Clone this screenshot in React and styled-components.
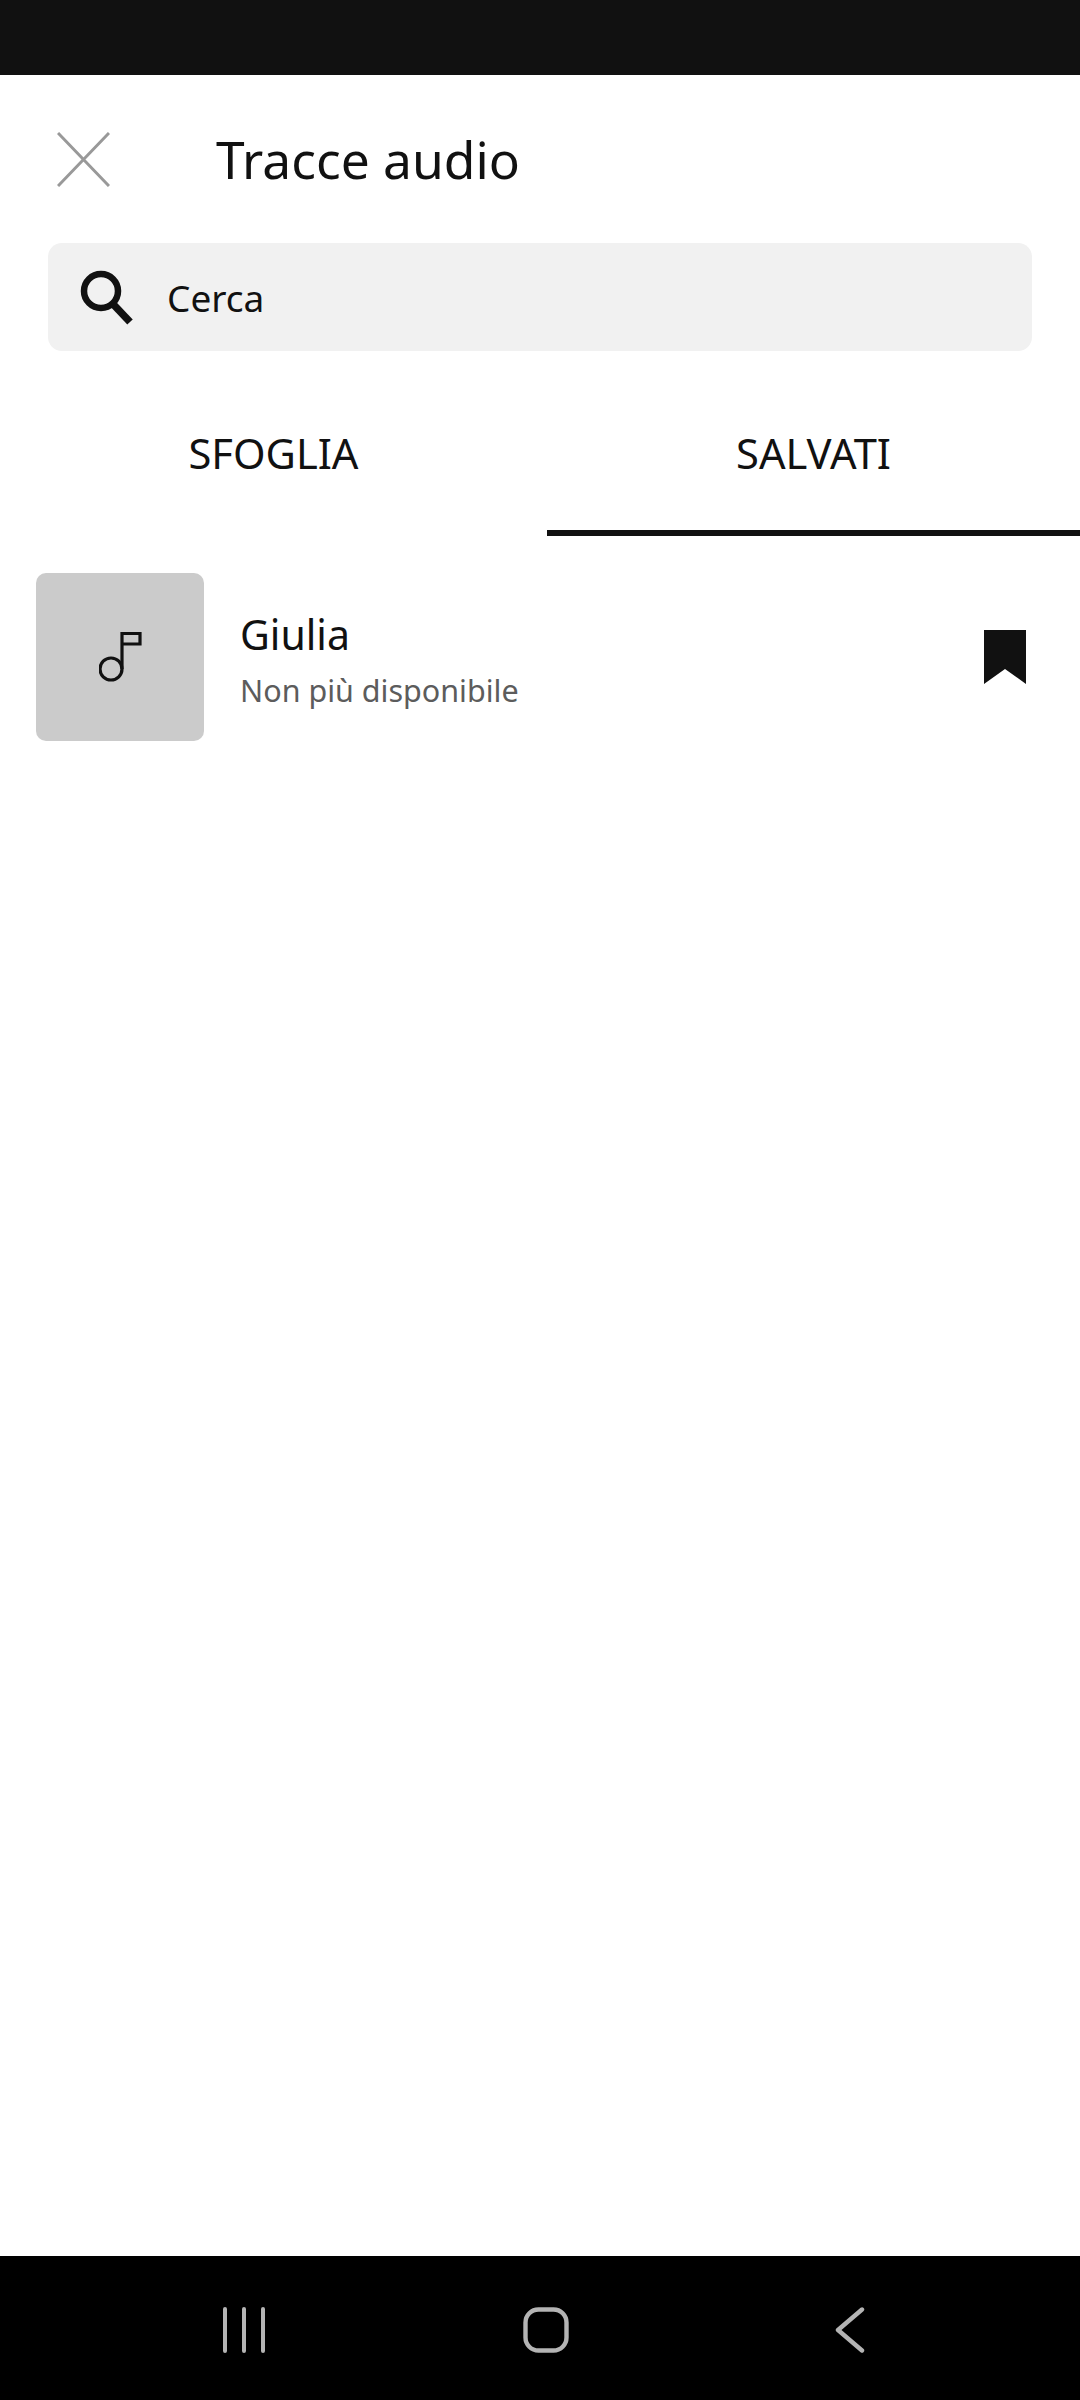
import React from "react";
import styled, { createGlobalStyle } from "styled-components";

const Global = createGlobalStyle`
  html, body { margin: 0; padding: 0; background: #fff; }
  * { box-sizing: border-box; }
`;
const Screen = styled.div`
  width: 1080px; height: 2400px; display: flex; flex-direction: column;
  background: #fff; color: #111; font-family: "Noto Sans", "Open Sans", sans-serif;
`;
const StatusBar = styled.div`height: 75px; background: #111; flex: none;`;
const Header = styled.header`
  height: 168px; flex: none; display: flex; align-items: center; padding: 0 0 0 57px;
`;
const CloseIcon = styled.svg`width: 53px; height: 55px; flex: none; margin-right: 106px;`;
const Title = styled.h1`margin: 0; font-size: 51.5px; line-height: 64px; font-weight: 400;`;
const SearchBar = styled.div`
  height: 108px; margin: 0 48px; flex: none; background: #f1f1f1; border-radius: 14px;
  display: flex; align-items: center; padding-left: 31px; gap: 34px;
`;
const SearchIcon = styled.svg`width: 54px; height: 56px; flex: none;`;
const SearchText = styled.span`font-size: 37px; line-height: 48px; padding-top: 2px;`;
const Tabs = styled.nav`height: 185px; flex: none; display: flex;`;
const Tab = styled.div`
  width: ${p => p.$w}px; flex: none; display: flex; justify-content: center; align-items: flex-start;
  padding-top: 74px; font-size: 41.7px; line-height: 56px;
  border-bottom: 6px solid ${p => (p.$active ? "#111" : "transparent")};
`;
const Row = styled.div`
  display: flex; align-items: center; margin-top: 37px; padding: 0 54px 0 36px; flex: none;
`;
const Thumb = styled.div`
  width: 168px; height: 168px; flex: none; background: #cbcbcb; border-radius: 10px;
  display: flex; align-items: center; justify-content: center;
`;
const NoteIcon = styled.svg`width: 43px; height: 50px;`;
const Info = styled.div`flex: 1; margin-left: 36px; padding-top: 4px; display: flex; flex-direction: column;`;
const Name = styled.div`font-size: 41px; line-height: 56px;`;
const Sub = styled.div`font-size: 30.5px; line-height: 44px; color: #5c5c5c; margin-top: 6px;`;
const BookmarkIcon = styled.svg`width: 42px; height: 54px; flex: none;`;
const Spacer = styled.div`flex: 1;`;
const NavBar = styled.footer`
  height: 144px; flex: none; background: #000; display: flex; align-items: center;
  padding: 4px 0 0 222px;
`;
const NavIcon = styled.svg`
  flex: none; height: 46px; width: ${p => p.$w}px; margin-right: ${p => p.$mr || 0}px;
`;

export default function App() {
  return (
    <Screen>
      <Global />
      <StatusBar />
      <Header>
        <CloseIcon viewBox="0 0 53 55">
          <path d="M1 1 L52 54 M52 1 L1 54" stroke="#999" strokeWidth="3" fill="none" />
        </CloseIcon>
        <Title>Tracce audio</Title>
      </Header>
      <SearchBar>
        <SearchIcon viewBox="0 0 54 56">
          <circle cx="22" cy="22" r="17" stroke="#111" strokeWidth="6.5" fill="none" />
          <path d="M34 35 L51 53" stroke="#111" strokeWidth="7.5" fill="none" />
        </SearchIcon>
        <SearchText>Cerca</SearchText>
      </SearchBar>
      <Tabs>
        <Tab $w={547}>SFOGLIA</Tab>
        <Tab $w={533} $active>SALVATI</Tab>
      </Tabs>
      <Row>
        <Thumb>
          <NoteIcon viewBox="0 0 43 50">
            <circle cx="12" cy="37" r="11" stroke="#111" strokeWidth="3.2" fill="none" />
            <path d="M23 37 V1.5 H41 V12 H23" stroke="#111" strokeWidth="3.2" fill="none" />
          </NoteIcon>
        </Thumb>
        <Info>
          <Name>Giulia</Name>
          <Sub>Non più disponibile</Sub>
        </Info>
        <BookmarkIcon viewBox="0 0 42 54">
          <path d="M0 0 H42 V54 L21 39 L0 54 Z" fill="#111" />
        </BookmarkIcon>
      </Row>
      <Spacer />
      <NavBar>
        <NavIcon $w={44} $mr={257} viewBox="0 0 44 46">
          <path d="M3 2 V44 M22 2 V44 M41 2 V44" stroke="#b4b4b4" strokeWidth="4" strokeLinecap="round" fill="none" />
        </NavIcon>
        <NavIcon $w={46} $mr={266} viewBox="0 0 46 46">
          <rect x="2.5" y="2.5" width="41" height="41" rx="13" stroke="#b4b4b4" strokeWidth="4.4" fill="none" />
        </NavIcon>
        <NavIcon $w={31} viewBox="0 0 31 46">
          <path d="M27 2.5 L3 23 L27 43.5" stroke="#b4b4b4" strokeWidth="4.4" strokeLinecap="round" strokeLinejoin="round" fill="none" />
        </NavIcon>
      </NavBar>
    </Screen>
  );
}
